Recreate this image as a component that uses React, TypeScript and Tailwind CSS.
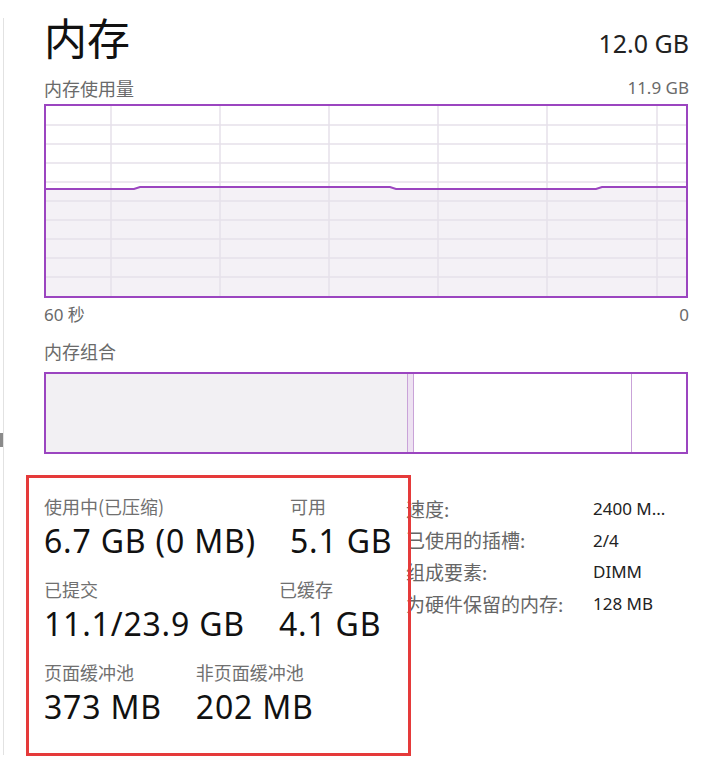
const hLines = [19, 38, 57, 76, 95, 114, 133, 152, 171];
const vLines = [65, 174, 283, 392, 501, 611];

const usage = "0,83 88,83 94,81 344,81 350,83 550,83 556,81 640,81";

const stats = [
  [
    { label: "使用中(已压缩)", value: "6.7 GB (0 MB)" },
    { label: "可用", value: "5.1 GB" },
  ],
  [
    { label: "已提交", value: "11.1/23.9 GB" },
    { label: "已缓存", value: "4.1 GB" },
  ],
  [
    { label: "页面缓冲池", value: "373 MB" },
    { label: "非页面缓冲池", value: "202 MB" },
  ],
];

const details = [
  ["速度:", "2400 M..."],
  ["已使用的插槽:", "2/4"],
  ["组成要素:", "DIMM"],
  ["为硬件保留的内存:", "128 MB"],
];

const App = () => {
  return (
    <div className="relative w-[720px] h-[780px] bg-white pt-[18px] font-['Noto_Sans','Noto_Sans_CJK_SC',sans-serif] text-[#1a1a1a]">
      <div className="absolute left-0 top-[433px] w-[3px] h-[14px] bg-[#8a8a8a]"></div>

      <div className="ml-[3px] h-[737px] border-l border-[#e2e2e2] pl-[40px] w-[645px] box-content">
        <div className="flex justify-between items-end h-[44px]">
          <div className="text-[43px] leading-[44px] mb-[4px] font-['Noto_Sans_CJK_SC',sans-serif] text-[#111]">内存</div>
          <div className="text-[25px] leading-[30px] pb-[4px] text-[#222]">12.0 GB</div>
        </div>

        <div className="flex justify-between items-center h-[24px] mt-[14px] text-[17px] text-[#6a6a6a]">
          <span className="font-['Noto_Sans_CJK_SC',sans-serif] text-[18px]">内存使用量</span>
          <span>11.9 GB</span>
        </div>

        <div className="mt-[4px] w-[644px] h-[194px] border-2 border-[#9b45c0]">
          <svg width="640" height="190" viewBox="0 0 640 190" className="block">
            <polygon points={`${usage} 640,190 0,190`} fill="#f4f1f6" />
            {hLines.map((y) => (
              <line key={y} x1="0" y1={y} x2="640" y2={y} stroke="#e6e0ea" strokeWidth="1.5" />
            ))}
            {vLines.map((x) => (
              <line key={x} x1={x} y1="0" x2={x} y2="190" stroke="#e6e0ea" strokeWidth="1.5" />
            ))}
            <polyline points={usage} fill="none" stroke="#9b45c0" strokeWidth="2" />
          </svg>
        </div>

        <div className="flex justify-between items-center h-[24px] mt-[5px] text-[17px] text-[#6a6a6a]">
          <span>60 秒</span>
          <span>0</span>
        </div>

        <div className="h-[24px] mt-[12px] flex items-center text-[18px] text-[#6a6a6a] font-['Noto_Sans_CJK_SC',sans-serif]">
          内存组合
        </div>

        <div className="mt-[9px] w-[644px] h-[82px] border-2 border-[#9b45c0] flex">
          <div className="w-[361px] bg-[#f2f0f3]"></div>
          <div className="w-[7px] bg-[#eee2f2] border-x border-[#c9a3d8]"></div>
          <div className="w-[218px] bg-white border-r border-[#c9a3d8]"></div>
          <div className="flex-1 bg-white"></div>
        </div>

        <div className="mt-[38px] flex">
          <div className="w-[364px] flex flex-col gap-[13px]">
            {stats.map((row, i) => (
              <div key={i} className="flex gap-[34px]">
                {row.map((s) => (
                  <div key={s.label} className="flex flex-col">
                    <div className="h-[28px] leading-[28px] text-[18px] text-[#707070] font-['Noto_Sans_CJK_SC',sans-serif] whitespace-nowrap">
                      {s.label}
                    </div>
                    <div className="h-[42px] leading-[42px] text-[32px] tracking-[0.8px] text-[#111] whitespace-nowrap">{s.value}</div>
                  </div>
                ))}
              </div>
            ))}
          </div>

          <div className="flex flex-col pt-[1px] -ml-[2px]">
            {details.map(([k, v]) => (
              <div key={k} className="grid grid-cols-[187px_1fr] h-[31.7px] items-center text-[17px]">
                <span className="text-[#666] text-[19px] font-['Noto_Sans_CJK_SC',sans-serif] whitespace-nowrap">{k}</span>
                <span className="text-[#222] whitespace-nowrap">{v}</span>
              </div>
            ))}
          </div>
        </div>
      </div>

      <div className="absolute left-[26px] top-[475px] w-[385px] h-[281px] border-[3px] border-[#e53a3a]"></div>
    </div>
  );
};

export default App;
